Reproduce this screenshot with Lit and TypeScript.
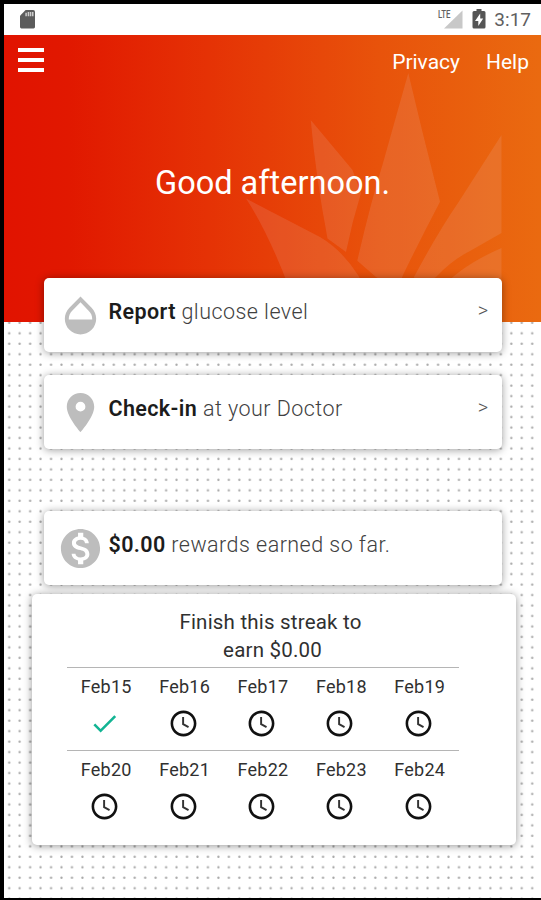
import { LitElement, html, css, svg, nothing } from "lit";
import { customElement, property } from "lit/decorators.js";

const glyphs: Record<string, unknown> = {
  drop: svg`<path d="M17.66 8 12 2.35 6.34 8C4.78 9.56 4 11.64 4 13.64s.78 4.11 2.34 5.67 3.61 2.35 5.66 2.35 4.1-.79 5.66-2.35S20 15.64 20 13.64 19.22 9.56 17.66 8zM6 14c.01-2 .62-3.27 1.76-4.4L12 5.27l4.24 4.38C17.38 10.77 17.99 12 18 14H6z"/>`,
  pin: svg`<path d="M12 2C8.13 2 5 5.13 5 9c0 5.25 7 13 7 13s7-7.75 7-13c0-3.87-3.13-7-7-7zm0 9.500a2.500 2.500 0 1 1 0-5 2.500 2.500 0 0 1 0 5z"/>`,
  dollar: svg`<path d="M12 2C6.480 2 2 6.480 2 12s4.480 10 10 10 10-4.480 10-10S17.520 2 12 2zm1.410 16.090V20h-2.670v-1.930c-1.710-.36-3.160-1.460-3.270-3.400h1.960c.1 1.050.82 1.870 2.650 1.870 1.960 0 2.400-.98 2.400-1.590 0-.83-.44-1.610-2.670-2.140-2.480-.6-4.180-1.620-4.180-3.670 0-1.720 1.390-2.840 3.110-3.210V4h2.670v1.950c1.860.45 2.790 1.860 2.850 3.390H14.300c-.05-1.110-.64-1.870-2.220-1.870-1.500 0-2.400.68-2.400 1.640 0 .84.65 1.390 2.670 1.910s4.180 1.390 4.180 3.910c-.01 1.830-1.380 2.830-3.120 3.160z"/>`,
  clock: svg`<path d="M11.990 2C6.470 2 2 6.480 2 12s4.470 10 9.990 10C17.520 22 22 17.520 22 12S17.520 2 11.990 2zM12 20c-4.420 0-8-3.580-8-8s3.580-8 8-8 8 3.580 8 8-3.580 8-8 8z"/><path d="M11.700 7v5.500l4.200 2.300" fill="none" stroke="#333" stroke-width="1.500"/>`,
  check: svg`<path d="M9 16.170 4.830 12l-1.420 1.410L9 19 21 7l-1.410-1.410z"/>`,
};

@customElement("action-card")
class ActionCard extends LitElement {
  @property() icon = "";
  @property() strong = "";
  @property() text = "";
  @property({ type: Boolean }) link = false;

  static styles = css`
    :host {
      display: flex;
      align-items: center;
      box-sizing: border-box;
      height: 74px;
      padding: 0 14px 0 13px;
      border-radius: 5px;
      background: #fff;
      box-shadow: 0 1px 8px rgba(0, 0, 0, 0.4);
    }
    .icon {
      width: 47px;
      height: 47px;
      flex: none;
      fill: #bdbdbd;
    }
    .label {
      flex: 1;
      margin-left: 4.500px;
      padding-bottom: 7px;
      font-size: 21.500px;
      line-height: 28px;
      white-space: nowrap;
      color: #404040;
      font-weight: 350;
      letter-spacing: 0.46px;
    }
    .strong {
      font-weight: 600;
      color: #1c1c1c;
      letter-spacing: 0.38px;
    }
    .arrow {
      font-size: 20px;
      line-height: 28px;
      color: #555;
      font-weight: 350;
      padding-bottom: 10px;
    }
  `;

  render() {
    return html`
      <svg class="icon" viewBox="0 0 24 24">${glyphs[this.icon]}</svg>
      <div class="label"><span class="strong">${this.strong}</span> ${this.text}</div>
      ${this.link ? html`<span class="arrow">&gt;</span>` : nothing}
    `;
  }
}

@customElement("streak-card")
class StreakCard extends LitElement {
  static styles = css`
    :host {
      display: block;
      box-sizing: border-box;
      height: 251px;
      padding: 15px 57px 0 35px;
      border-radius: 5px;
      background: #fff;
      box-shadow: 0 1px 8px rgba(0, 0, 0, 0.42);
      color: #303030;
      font-weight: 370;
    }
    .title {
      font-size: 20.500px;
      line-height: 27.500px;
      text-align: center;
      padding: 0 0 3px 15px;
      letter-spacing: 0.2px;
    }
    .amount {
      padding-left: 4px;
    }
    .week {
      display: grid;
      grid-template-columns: repeat(5, 78.4px);
      height: 82px;
      border-top: 1px solid #b5b5b5;
    }
    .day {
      display: flex;
      flex-direction: column;
      align-items: center;
      padding-top: 7px;
      font-size: 18px;
      line-height: 24px;
      letter-spacing: 0.25px;
    }
    .mark {
      width: 31px;
      height: 31px;
      margin: 9px 3px 0 0;
      fill: #111;
    }
    .done {
      fill: #12b493;
    }
  `;

  render() {
    const weeks = [
      [15, 16, 17, 18, 19],
      [20, 21, 22, 23, 24],
    ];
    return html`
      <div class="title">Finish this streak to<br /><span class="amount">earn $0.00</span></div>
      ${weeks.map(
        (week) => html`<div class="week">
          ${week.map(
            (d) => html`<div class="day">
              <span>Feb${d}</span>
              <svg class="mark ${d === 15 ? "done" : ""}" viewBox="0 0 24 24">
                ${d === 15 ? glyphs.check : glyphs.clock}
              </svg>
            </div>`
          )}
        </div>`
      )}
    `;
  }
}

@customElement("app-root")
class AppRoot extends LitElement {
  static styles = css`
    :host {
      display: block;
      box-sizing: border-box;
      width: 541px;
      height: 900px;
      padding: 4px 0 2px 4px;
      background: #000;
      overflow: hidden;
      font-family: Roboto, "Liberation Sans", sans-serif;
    }
    .screen {
      position: relative;
      height: 894px;
      background: #fff;
      overflow: hidden;
    }
    .status {
      display: flex;
      align-items: center;
      box-sizing: border-box;
      height: 31px;
      padding: 0 10px 0 16px;
      color: #606060;
    }
    .sd {
      width: 15px;
      height: 19px;
      margin: 0 auto 1px 0;
    }
    .signal {
      width: 26px;
      height: 22px;
    }
    .battery {
      width: 14px;
      height: 20px;
      margin: 0 8px 1px 9px;
    }
    .time {
      font-size: 19px;
      line-height: 31px;
    }
    .lte {
      font-size: 10.500px;
      font-weight: 500;
      fill: #606060;
    }
    .dots {
      position: absolute;
      inset: 0;
      width: 537px;
      height: 894px;
    }
    .front {
      position: relative;
    }
    .hero {
      height: 287px;
      background: linear-gradient(90deg, #e11300 0%, #e11800 12%, #e53205 38%, #e8530b 70%, #ea6a10 100%);
      color: #fff;
    }
    .leaves {
      position: absolute;
      inset: 31px 0 auto 0;
      width: 537px;
      height: 287px;
      fill: rgba(235, 200, 200, 0.14);
    }
    .nav {
      position: relative;
      display: flex;
      align-items: center;
      gap: 26px;
      height: 53px;
      padding: 0 12px 0 14px;
      font-size: 21px;
    }
    .menu {
      display: grid;
      gap: 6.300px;
      width: 25.500px;
      margin: 0 auto 3px 0;
    }
    .bar {
      height: 4px;
      background: #fff;
    }
    .greeting {
      position: relative;
      margin: 74px 0 0;
      text-align: center;
      font-size: 32.500px;
      line-height: 42px;
    }
    .cards {
      position: relative;
      display: grid;
      gap: 23px;
      width: 458px;
      margin: -44px 0 0 40px;
    }
    .rewards {
      margin-top: 39px;
    }
    .streak {
      position: relative;
      width: 484px;
      margin: 9px 0 0 28px;
    }
  `;

  render() {
    return html`
      <div class="screen">
        <svg class="dots">
          <defs>
            <pattern id="grid" x="0" y="314.300" width="10.460" height="10.470" patternUnits="userSpaceOnUse">
              <circle cx="5.200" cy="4.600" r="1.150" fill="#a8a8a8" />
            </pattern>
          </defs>
          <rect y="317" width="537" height="577" fill="url(#grid)" />
        </svg>
        <div class="front">
          <div class="status">
            <svg class="sd" viewBox="0 0 16 20" preserveAspectRatio="none">
              <path d="M6 0h8a2 2 0 0 1 2 2v16a1.500 1.500 0 0 1-1.500 1.500h-13A1.500 1.500 0 0 1 0 18V6z" fill="#5c5c5c" />
              <path d="M6.500 3v3.500M9 2v4.500M11.300 2v4.500M13.600 2v4.500" stroke="#ccc" stroke-width="1.600" />
            </svg>
            <svg class="signal" viewBox="0 0 26 22">
              <path d="M25.500 1.500V19.500H7z" fill="#c8c8c8" />
              <text class="lte" x="1" y="9" textLength="12.500" lengthAdjust="spacingAndGlyphs">LTE</text>
            </svg>
            <svg class="battery" viewBox="0 0 14 20">
              <path d="M4.500 0h5v2H12a1.500 1.500 0 0 1 1.500 1.500V18a1.500 1.500 0 0 1-1.500 1.500H2A1.500 1.500 0 0 1 .5 18V3.500A1.500 1.500 0 0 1 2 2h2.500z" fill="#555" />
              <path d="M8.200 4.500 3 12h3.300v5L11.200 9.500H8.200z" fill="#fff" />
            </svg>
            <span class="time">3:17</span>
          </div>
          <div class="hero">
            <svg class="leaves" viewBox="4 35 537 287">
              <path d="M408.300 73 422 130 440 201.700 Q420 240 403 275L397 290 376 277 357.300 260.700Q370 205 383 163z" />
              <path d="M310.700 120 352.500 170 361 193Q352 222 346 252L327.500 238.500Q316 178 310.700 120z" />
              <path d="M246 198.500 320 237Q342 250 358 275L366 290H290Q268 232 246 198.500z" />
              <path d="M501.500 135V233L470 251Q452 260 436 277L416 290 414 277Q438 232 458 203z" />
              <path d="M501.500 248V290H440Q460 266 501.500 248z" />
            </svg>
            <div class="nav">
              <div class="menu">
                <div class="bar"></div>
                <div class="bar"></div>
                <div class="bar"></div>
              </div>
              <span>Privacy</span>
              <span>Help</span>
            </div>
            <div class="greeting">Good afternoon.</div>
          </div>
          <div class="cards">
            <action-card icon="drop" strong="Report" text="glucose level" link></action-card>
            <action-card icon="pin" strong="Check-in" text="at your Doctor" link></action-card>
            <action-card class="rewards" icon="dollar" strong="$0.00" text="rewards earned so far."></action-card>
          </div>
          <streak-card class="streak"></streak-card>
        </div>
      </div>
    `;
  }
}
